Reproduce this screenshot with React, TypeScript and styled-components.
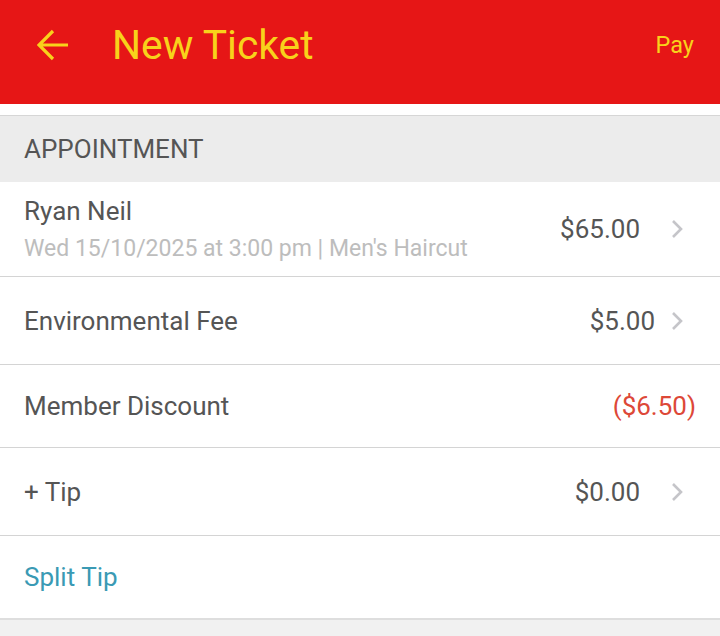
import React from "react";
import styled, { createGlobalStyle } from "styled-components";

const GlobalStyle = createGlobalStyle`
  html, body {
    margin: 0;
    padding: 0;
    background: #f1f1f1;
    font-family: Roboto, "Noto Sans", sans-serif;
  }
`;

const Page = styled.div`
  width: 720px;
  min-height: 636px;
  background: #f1f1f1;
`;

const Toolbar = styled.header`
  height: 104px;
  background: #e61616;
  display: flex;
  align-items: center;
  padding: 0 26px 0 37px;
  box-sizing: border-box;
  color: #f8d21b;
`;

const BackButton = styled.button`
  background: none;
  border: 0;
  padding: 0;
  width: 32px;
  height: 32px;
  display: flex;
  align-items: center;
  justify-content: center;
  margin-top: -14px;
`;

const Title = styled.h1`
  margin: -15px 0 0 43px;
  font-size: 40.8px;
  font-weight: 400;
  flex: 1;
`;

const PayButton = styled.button`
  background: none;
  border: 0;
  padding: 0;
  color: #f8d21b;
  font-family: inherit;
  font-size: 23.5px;
  margin-top: -14px;
`;

const Content = styled.div`
  background: #fff;
  padding-top: 11px;
  border-bottom: 2px solid #dedede;
`;

const SectionHeader = styled.div`
  height: 66px;
  background: #ececec;
  border-top: 1px solid #d6d6d6;
  display: flex;
  align-items: center;
  padding: 0 24px;
  font-size: 26px;
  color: #555;
`;

const Row = styled.div<{ $height: number; $last?: boolean }>`
  height: ${(p) => p.$height}px;
  display: flex;
  align-items: center;
  padding: 0 24px;
  border-bottom: ${(p) => (p.$last ? "0" : "1px solid #d4d4d4")};
  background: #fff;
`;

const Info = styled.div`
  flex: 1;
  display: flex;
  flex-direction: column;
  gap: 9px;
`;

const Label = styled.span<{ $link?: boolean }>`
  font-size: 26px;
  line-height: 30px;
  color: ${(p) => (p.$link ? "#3a9ab4" : "#555")};
`;

const Sub = styled.span`
  font-size: 23px;
  line-height: 27px;
  color: #bdbdbd;
`;

const Amount = styled.span<{ $negative?: boolean; $gap?: number }>`
  font-size: 26px;
  color: ${(p) => (p.$negative ? "#dd4838" : "#555")};
  margin-right: ${(p) => p.$gap ?? 0}px;
`;

const ChevronBox = styled.span`
  display: flex;
  margin-right: 12px;
`;

const Chevron = () => (
  <ChevronBox>
    <svg width="14" height="20" viewBox="0 0 14 20">
      <path d="M3 2 L11 10 L3 18" fill="none" stroke="#c5c5c9" strokeWidth="2.6" />
    </svg>
  </ChevronBox>
);

const BackArrow = () => (
  <svg width="32" height="32" viewBox="0 0 32 32">
    <path
      d="M2 16 H31 M16 2 L2 16 L16 30"
      fill="none"
      stroke="#f8d21b"
      strokeWidth="3.2"
      strokeLinecap="butt"
    />
  </svg>
);

const App: React.FC = () => {
  return (
    <Page>
      <GlobalStyle />
      <Toolbar>
        <BackButton>
          <BackArrow />
        </BackButton>
        <Title>New Ticket</Title>
        <PayButton>Pay</PayButton>
      </Toolbar>
      <Content>
        <SectionHeader>APPOINTMENT</SectionHeader>
        <Row $height={94}>
          <Info>
            <Label>Ryan Neil</Label>
            <Sub>Wed 15/10/2025 at 3:00 pm | Men's Haircut</Sub>
          </Info>
          <Amount $gap={30}>$65.00</Amount>
          <Chevron />
        </Row>
        <Row $height={87}>
          <Info>
            <Label>Environmental Fee</Label>
          </Info>
          <Amount $gap={15}>$5.00</Amount>
          <Chevron />
        </Row>
        <Row $height={82}>
          <Info>
            <Label>Member Discount</Label>
          </Info>
          <Amount $negative>($6.50)</Amount>
        </Row>
        <Row $height={87}>
          <Info>
            <Label>+ Tip</Label>
          </Info>
          <Amount $gap={30}>$0.00</Amount>
          <Chevron />
        </Row>
        <Row $height={82} $last>
          <Info>
            <Label $link>Split Tip</Label>
          </Info>
        </Row>
      </Content>
    </Page>
  );
};

export default App;
